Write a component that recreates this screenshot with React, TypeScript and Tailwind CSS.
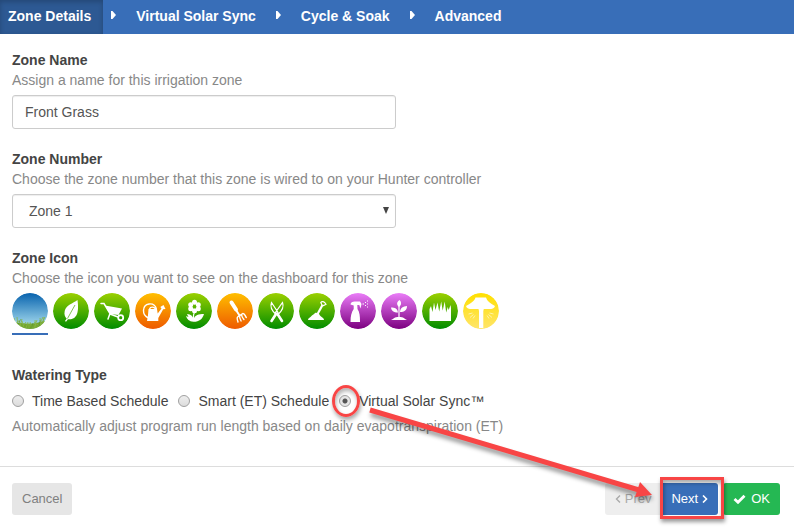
import { useState, type ReactNode } from "react";

type ZoneIcon = {
  name: string;
  from: string;
  to: string;
  art: ReactNode;
};

const GREEN = { from: "#9bd000", to: "#008c00" };
const ORANGE = { from: "#ffbf00", to: "#ee5a00" };
const PURPLE = { from: "#ea7df8", to: "#7c0080" };

const zoneIcons: ZoneIcon[] = [
  {
    name: "Sky",
    from: "#0863ae",
    to: "#b4e6f4",
    art: (
      <>
        <path
          d="M0 31c3-2 6-1 9-1 7 1 13 1 19-1 3-1 6-1 8 1v6H0Z"
          fill="#73a630"
        />
        <path
          d="M4 34 2 25M6 34 5 24M8 34l2-8M9 34 7 27M12 35l-2-7M14 35l2-6M17 35v-5M20 35l-2-6M22 35l3-8M24 35l-1-8M26 34l5-10M28 33l5-9M29 33l-1-8M31 31l1-7M3 31l4-3M11 33l3-4M26 32l-4-3"
          stroke="#86b544"
          strokeWidth=".8"
        />
        <path
          d="M5 33 9 26M19 35l2-5M27 34l1-7M30 33l4-5"
          stroke="#4f8a28"
          strokeWidth=".5"
        />
      </>
    ),
  },
  {
    name: "Leaf",
    ...GREEN,
    art: (
      <>
        <path
          d="M24.500 7C20 10.500 13 12 11.700 18c-.8 3.500.3 6 2 7.500L12 28l1 .7 2-2.500c5 .8 8.500-2.300 9.500-7 1-4 .5-8.200 0-12.200Z"
          fill="#fff"
        />
        <path
          d="M14.500 25.500C17 21 19.500 16.500 22 12"
          stroke="#48ab00"
          strokeWidth=".7"
          fill="none"
        />
      </>
    ),
  },
  {
    name: "Wheelbarrow",
    ...GREEN,
    art: (
      <>
        <path d="M11 12.500 28 15.500 24.500 22 16 21Z" fill="#fff" />
        <path
          d="M7 10.500h3l6 10L14 26M16 21l8 3"
          stroke="#fff"
          strokeWidth="1.500"
          fill="none"
          strokeLinecap="round"
        />
        <circle cx="26.700" cy="24.700" r="2.500" stroke="#fff" strokeWidth="1.800" fill="none" />
      </>
    ),
  },
  {
    name: "Watering can",
    ...ORANGE,
    art: (
      <>
        <path
          d="M13.500 16h8.500l.7 4.500 3.800-5-1.200-1.500 3.200-2 2 4-2.300.2L23.300 25v3H12l1-6Z"
          fill="#fff"
        />
        <path
          d="M13.500 25c-7-3-6.500-13 .5-14 4-.5 6.500 1.500 7.500 5M14.500 16c1-2.500 4.500-2.500 6 0"
          stroke="#fff"
          strokeWidth="1.400"
          fill="none"
        />
      </>
    ),
  },
  {
    name: "Flower",
    ...GREEN,
    art: (
      <>
        <g fill="#fff">
          <circle cx="18.500" cy="9.300" r="2.500" />
          <circle cx="22.300" cy="11.700" r="2.500" />
          <circle cx="22.300" cy="15.800" r="2.500" />
          <circle cx="18.500" cy="17.800" r="2.500" />
          <circle cx="14.700" cy="15.800" r="2.500" />
          <circle cx="14.700" cy="11.700" r="2.500" />
          <path d="M28 21c-1.500 5-4.500 7.700-10.500 7.800-4.500-.3-6.500-2.800-7.500-5.800l2.500 1-1.500-3c4 .2 5.800 2.200 6.500 5 1.500-4 5-5 10.500-5Z" />
        </g>
        <circle cx="18.500" cy="13.700" r="1.600" fill="#5cb400" />
        <path d="M18.500 19c-1 2-1.500 4-1 7" stroke="#fff" strokeWidth="1.200" fill="none" />
      </>
    ),
  },
  {
    name: "Hand rake",
    ...ORANGE,
    art: (
      <g fill="none" stroke="#fff" strokeLinecap="round">
        <path d="m14.500 9.500 4.500 7" strokeWidth="4" />
        <path d="m19 17 3.500 5.500" strokeWidth="2" />
        <path
          d="M21 29c-.5-2.500-2-4 0-5.500l5-3c2 0 2 2.500 3.300 4M22.500 22.700c0 2 .8 3.800 1.600 5.300M24.500 21.500c.2 2 1.200 3.700 2.400 5"
          strokeWidth="1.400"
        />
      </g>
    ),
  },
  {
    name: "Shears",
    ...GREEN,
    art: (
      <>
        <g fill="none" stroke="#fff" strokeWidth="1.200">
          <path d="M13.500 9.500c-1.500 4 0 8 4.500 12L20 19.500ZM24.500 9.500c1.500 4 0 8-4.500 12L17.500 19.500Z" />
        </g>
        <path
          d="m18 21-4.500 7M19.500 21l4.500 7"
          stroke="#fff"
          strokeWidth="2.600"
          strokeLinecap="round"
        />
      </>
    ),
  },
  {
    name: "Shovel",
    ...GREEN,
    art: (
      <>
        <path
          d="M9 27c0-2 2-2.500 3-3.500 1-2 3-1.500 4-3.500 2-.5 4 .5 5 2.500 1 1.800 4 2 4 4.500Z"
          fill="#fff"
        />
        <path d="m18 22 5.500-10" stroke="#fff" strokeWidth="2.200" />
        <path
          d="M23 12 21.800 9.500c1-1.500 3.500-1.200 5.200 1.700L24.500 12.500Z"
          fill="none"
          stroke="#fff"
          strokeWidth="1.200"
        />
      </>
    ),
  },
  {
    name: "Sprayer",
    ...PURPLE,
    art: (
      <>
        <path
          d="M10.500 11.500c0-2 2-3 4-3h5.500l1.500 2.500-1 4.500-1.200-3.500h-2l.2 4c2.200 3 2.500 7 2.500 13h-9.500c0-6 1-10 3.200-13v-3.500Z"
          fill="#fff"
        />
        <path
          d="M22.500 11h1.500M25 9.500h1M25 12.500h1M27 8h1M27 11h1M27 14h1"
          stroke="#fff"
          strokeWidth="1"
        />
      </>
    ),
  },
  {
    name: "Sprout",
    ...PURPLE,
    art: (
      <>
        <g fill="#fff">
          <path d="M18 14c-3-3-2-5 .5-7 2 2 2.500 4.500-.5 7ZM17 19.500c-4.500 0-6.500-1.500-7-5 4 0 6.500 1 7 5ZM19 19c.5-4.500 3-5.500 7-6 0 4-2.500 6-7 6Z" />
          <path d="M10 27c3-1.500 3-3 8-3s5 1.500 8 3Z" />
        </g>
        <path d="M18 12v13" stroke="#fff" strokeWidth="1.200" />
      </>
    ),
  },
  {
    name: "Tall grass",
    ...GREEN,
    art: (
      <path
        d="M7.500 28V16l1.500-3 1.500 6 1.500-9.500 1.500 7.500 2-7.500 1.700 9 2-10 1.500 9 2-9 1.500 11 1.500-5.500 1 3L28.500 12l.5 3v13Z"
        fill="#fff"
      />
    ),
  },
  {
    name: "Path light",
    from: "#ffe000",
    to: "#ffe56a",
    art: (
      <>
        <path
          d="M12.500 4.500h10.500c1 3.500 4 5.500 9 8.500-.5 2.500-3 3-6 3h-5.200l-.5 2V35H16V18l-.5-2H9c-3 0-5.500-.5-6-3 5-3 8.500-5 9.500-8.500Z"
          fill="#fff"
        />
        <path
          d="m9.500 20-4 1M10.500 21.500 7 24.500M12 22.500l-2 3M26.500 20l4 1M25.500 21.500l3.500 3M24 22.500l2 3"
          stroke="#fff9d2"
          strokeWidth=".7"
        />
      </>
    ),
  },
];

const steps = ["Zone Details", "Virtual Solar Sync", "Cycle & Soak", "Advanced"];
const wateringTypes = [
  "Time Based Schedule",
  "Smart (ET) Schedule",
  "Virtual Solar Sync™",
];

function StepArrow() {
  return (
    <svg viewBox="0 0 5 8" className="mx-2 mb-1 h-2 w-[5px] shrink-0" aria-hidden="true">
      <path d="M0 0h1.500L5 4 1.500 8H0Z" fill="#fff" />
    </svg>
  );
}

function Steps() {
  return (
    <nav className="flex h-[34px] items-stretch bg-[#386eb8] font-bold text-white">
      {steps.map((step, i) => (
        <div key={step} className="flex items-center">
          {i > 0 && <StepArrow />}
          <button
            type="button"
            className={
              i === 0
                ? "h-full bg-[#2d5993] pr-3 pb-[2px] pl-2 shadow-[inset_0_2px_5px_rgba(0,0,0,0.2)]"
                : "h-full px-3 pb-[2px]"
            }
          >
            {step}
          </button>
        </div>
      ))}
    </nav>
  );
}

function ZoneIconButton({
  icon,
  id,
  selected,
  onClick,
}: {
  icon: ZoneIcon;
  id: number;
  selected: boolean;
  onClick: () => void;
}) {
  return (
    <button
      type="button"
      aria-label={icon.name}
      aria-pressed={selected}
      onClick={onClick}
      className={
        selected
          ? "border-b-2 border-[#386eb8] pb-1"
          : "border-b-2 border-transparent pb-1"
      }
    >
      <svg viewBox="0 0 36 36" className="block size-9 rounded-full">
        <defs>
          <linearGradient id={`zone-${id}`} x1="0" y1="0" x2="0" y2="1">
            <stop offset="0" stopColor={icon.from} />
            <stop offset="1" stopColor={icon.to} />
          </linearGradient>
        </defs>
        <circle cx="18" cy="18" r="18" fill={`url(#zone-${id})`} />
        {icon.art}
      </svg>
    </button>
  );
}

export default function App() {
  const [zoneName, setZoneName] = useState("Front Grass");
  const [zoneIcon, setZoneIcon] = useState(0);
  const [watering, setWatering] = useState(2);

  return (
    <div className="relative overflow-hidden bg-white font-['Liberation_Sans',Arial,sans-serif] text-sm leading-5 text-[#444]">
      <Steps />

      <form className="px-3 pt-4 pb-[30px]">
        <div className="mb-5">
          <label htmlFor="zone-name" className="block font-bold">
            Zone Name
          </label>
          <p className="text-[#888]">Assign a name for this irrigation zone</p>
          <input
            id="zone-name"
            value={zoneName}
            onChange={(e) => setZoneName(e.target.value)}
            className="mt-[5px] block h-[34px] w-full max-w-96 rounded-[3px] border border-[#ccc] px-3 text-[#555] shadow-[inset_0_1px_1px_rgba(0,0,0,0.07)]"
          />
        </div>

        <div className="mb-5">
          <label htmlFor="zone-number" className="block font-bold">
            Zone Number
          </label>
          <p className="text-[#888]">
            Choose the zone number that this zone is wired to on your Hunter controller
          </p>
          <div className="relative mt-[5px] max-w-96">
            <select
              id="zone-number"
              className="block h-[34px] w-full appearance-none rounded-[3px] border border-[#ccc] bg-white px-4 text-[#555] shadow-[inset_0_1px_1px_rgba(0,0,0,0.07)]"
            >
              <option>Zone 1</option>
            </select>
            <svg
              viewBox="0 0 6 7"
              className="pointer-events-none absolute top-[13px] right-[7px] h-[7px] w-[6px]"
              aria-hidden="true"
            >
              <path d="M0 0h6L3 7Z" fill="#444" />
            </svg>
          </div>
        </div>

        <div className="mb-[30px]">
          <h2 className="font-bold">Zone Icon</h2>
          <p className="text-[#888]">
            Choose the icon you want to see on the dashboard for this zone
          </p>
          <div className="mt-[5px] flex flex-wrap gap-[5px]">
            {zoneIcons.map((icon, i) => (
              <ZoneIconButton
                key={icon.name}
                icon={icon}
                id={i}
                selected={zoneIcon === i}
                onClick={() => setZoneIcon(i)}
              />
            ))}
          </div>
        </div>

        <fieldset>
          <legend className="font-bold">Watering Type</legend>
          <div className="mt-[6px] flex flex-wrap gap-x-[10px]">
            {wateringTypes.map((type, i) => (
              <label key={type} className="flex items-center gap-2">
                <span className="relative flex">
                  <input
                    type="radio"
                    name="watering"
                    checked={watering === i}
                    onChange={() => setWatering(i)}
                    className="size-3 appearance-none rounded-full border border-[#a0a0a0] bg-linear-to-b from-[#eee] to-[#dcdcdc] checked:bg-[radial-gradient(circle,#555_0_2px,#e6e6e6_3px)]"
                  />
                  {i === 2 && (
                    <span className="pointer-events-none absolute -top-[10px] -left-[7px] h-8 w-7 rounded-[50%] border-3 border-[#f84545] shadow-[1px_3px_4px_rgba(0,0,0,0.35),inset_1px_3px_4px_rgba(0,0,0,0.3)]" />
                  )}
                </span>
                {type}
              </label>
            ))}
          </div>
          <p className="mt-[5px] text-[#888]">
            Automatically adjust program run length based on daily evapotranspiration (ET)
          </p>
        </fieldset>
      </form>

      <footer className="flex items-center justify-between border-t border-[#ddd] py-4 pr-[14px] pl-3 text-[13px]">
        <button type="button" className="h-8 rounded-[3px] bg-[#e6e6e6] px-[10px] text-[#808080]">
          Cancel
        </button>
        <div className="flex gap-[5px]">
          <div className="flex">
            <button
              type="button"
              disabled
              className="flex h-8 items-center gap-1 rounded-l-[3px] bg-[#eee] px-[10px] text-[#aaa]"
            >
              <svg viewBox="0 0 6 8" className="h-2 w-[6px]" aria-hidden="true">
                <path d="M5 0.500 1.500 4 5 7.500" fill="none" stroke="currentColor" strokeWidth="1.400" />
              </svg>
              Prev
            </button>
            <button
              type="button"
              className="relative flex h-8 items-center gap-1 rounded-r-[3px] bg-[#386eb8] px-[10px] text-white"
            >
              Next
              <svg viewBox="0 0 6 8" className="h-2 w-[6px]" aria-hidden="true">
                <path d="M1 0.500 4.500 4 1 7.500" fill="none" stroke="currentColor" strokeWidth="1.600" />
              </svg>
              <span className="pointer-events-none absolute -top-[6px] -right-[6px] -bottom-1 -left-px border-3 border-[#f84545] shadow-[1px_3px_4px_rgba(0,0,0,0.4),inset_1px_3px_4px_rgba(0,0,0,0.35)]" />
            </button>
          </div>
          <button
            type="button"
            className="flex h-8 items-center gap-[5px] rounded-[3px] bg-[#25b853] px-[10px] text-white"
          >
            <svg viewBox="0 0 13 10" className="h-[10px] w-[13px]" aria-hidden="true">
              <path d="m1.500 5 3.500 3.300L11.500 1.700" fill="none" stroke="currentColor" strokeWidth="2.800" />
            </svg>
            OK
          </button>
        </div>
      </footer>

      {/* callout arrow from the selected radio to Next */}
      <svg
        viewBox="0 0 300 110"
        className="pointer-events-none absolute top-[400px] left-[362px] h-[110px] w-[300px] drop-shadow-[1px_4px_2px_rgba(0,0,0,0.4)]"
        aria-hidden="true"
      >
        <path d="M8 10 277 90" stroke="#f84545" strokeWidth="5" />
        <path d="M278 82 290 95 273 97Z" fill="#f84545" />
      </svg>
    </div>
  );
}
